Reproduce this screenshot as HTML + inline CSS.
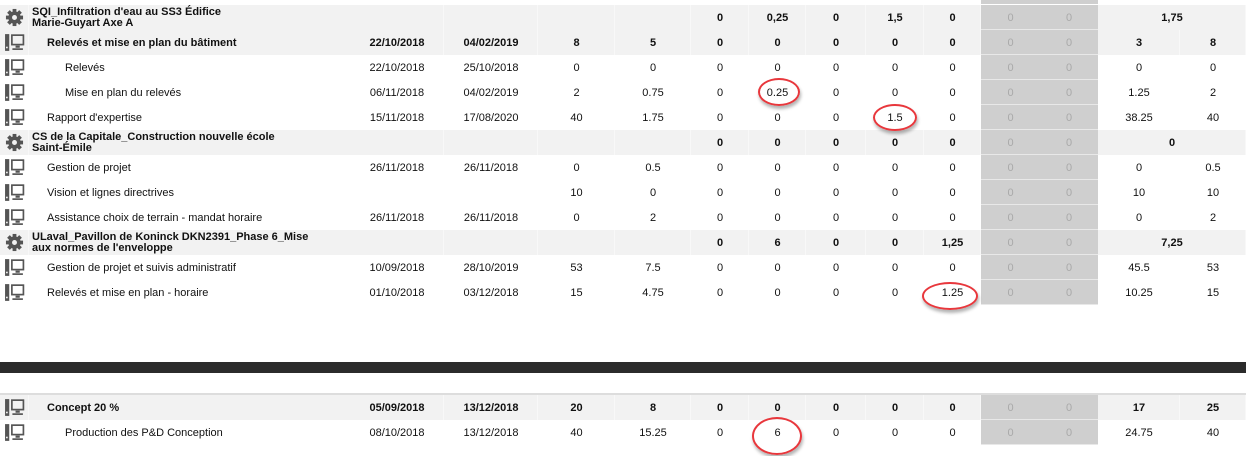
<!DOCTYPE html>
<html><head><meta charset="utf-8"><style>
body{margin:0;width:1246px;height:456px;background:#fff;position:relative;overflow:hidden;font-family:"Liberation Sans",Arial,sans-serif;font-size:11px;color:#111}
table{position:absolute;left:0;border-collapse:collapse;table-layout:fixed;width:1246px}
tr{height:25px}
td{height:25px;padding:0;text-align:center;white-space:nowrap;overflow:hidden;border:none}
tr.g td{background:#f2f2f2;box-shadow:inset -1px 0 0 #f8f8f8;font-weight:bold}
tr.g td.n{box-shadow:none}
td.gr{background:#cfcfcf!important;color:#a9a9a9;font-weight:normal!important;box-shadow:inset 0 -1px 0 #e8e8e8!important}
td.n{text-align:left}
td.p{line-height:11px;font-weight:bold}
.l1{padding-left:18px}.l2{padding-left:36px}.l0{padding-left:3px}
svg{display:block;margin:0 auto}
.ell{position:absolute;border:2.5px solid #e8373c;border-radius:50%;box-shadow:1px 3px 3px rgba(0,0,0,.3)}
</style></head><body>
<div style="position:absolute;left:981px;top:0;width:117px;height:4px;background:#cfcfcf"></div>
<svg width="0" height="0" style="position:absolute"><defs>
<symbol id="mon" viewBox="0 0 20 18"><rect x="1" y="1" width="4" height="16" fill="#555"/><rect x="2" y="13" width="1.5" height="1.5" fill="#fff"/><rect x="7.5" y="2" width="11" height="9" fill="none" stroke="#555" stroke-width="1.6"/><rect x="11" y="12" width="4" height="2" fill="#555"/><rect x="8" y="14.5" width="10" height="1.6" fill="#555"/></symbol>
<symbol id="gear" viewBox="0 0 20 20"><g fill="#555"><circle cx="10" cy="10" r="6.5"/><rect x="8" y="1" width="4" height="18"/><rect x="1" y="8" width="18" height="4"/><rect x="8" y="1" width="4" height="18" transform="rotate(45 10 10)"/><rect x="8" y="1" width="4" height="18" transform="rotate(-45 10 10)"/></g><circle cx="10" cy="10" r="2.6" fill="#f2f2f2"/></symbol>
</defs></svg>
<table style="top:5px">
<colgroup><col style="width:29px"><col style="width:321px"><col style="width:94px"><col style="width:94px"><col style="width:77px"><col style="width:76px"><col style="width:58px"><col style="width:57px"><col style="width:60px"><col style="width:58px"><col style="width:57px"><col style="width:59px"><col style="width:58px"><col style="width:82px"><col style="width:66px"></colgroup>
<tr class="g"><td class="i"><svg width="19" height="19"><use href="#gear"/></svg></td><td class="n p l0">SQI_Infiltration d'eau au SS3 Édifice<br>Marie-Guyart Axe A</td><td></td><td></td><td></td><td></td><td>0</td><td>0,25</td><td>0</td><td>1,5</td><td>0</td><td class="gr">0</td><td class="gr">0</td><td colspan="2">1,75</td></tr>
<tr class="g"><td class="i"><svg width="21" height="19"><use href="#mon"/></svg></td><td class="n l1">Relevés et mise en plan du bâtiment</td><td>22/10/2018</td><td>04/02/2019</td><td>8</td><td>5</td><td>0</td><td>0</td><td>0</td><td>0</td><td>0</td><td class="gr">0</td><td class="gr">0</td><td>3</td><td>8</td></tr>
<tr><td><svg width="21" height="19"><use href="#mon"/></svg></td><td class="n l2">Relevés</td><td>22/10/2018</td><td>25/10/2018</td><td>0</td><td>0</td><td>0</td><td>0</td><td>0</td><td>0</td><td>0</td><td class="gr">0</td><td class="gr">0</td><td>0</td><td>0</td></tr>
<tr><td><svg width="21" height="19"><use href="#mon"/></svg></td><td class="n l2">Mise en plan du relevés</td><td>06/11/2018</td><td>04/02/2019</td><td>2</td><td>0.75</td><td>0</td><td>0.25</td><td>0</td><td>0</td><td>0</td><td class="gr">0</td><td class="gr">0</td><td>1.25</td><td>2</td></tr>
<tr><td><svg width="21" height="19"><use href="#mon"/></svg></td><td class="n l1">Rapport d'expertise</td><td>15/11/2018</td><td>17/08/2020</td><td>40</td><td>1.75</td><td>0</td><td>0</td><td>0</td><td>1.5</td><td>0</td><td class="gr">0</td><td class="gr">0</td><td>38.25</td><td>40</td></tr>
<tr class="g"><td class="i"><svg width="19" height="19"><use href="#gear"/></svg></td><td class="n p l0">CS de la Capitale_Construction nouvelle école<br>Saint-Émile</td><td></td><td></td><td></td><td></td><td>0</td><td>0</td><td>0</td><td>0</td><td>0</td><td class="gr">0</td><td class="gr">0</td><td colspan="2">0</td></tr>
<tr><td><svg width="21" height="19"><use href="#mon"/></svg></td><td class="n l1">Gestion de projet</td><td>26/11/2018</td><td>26/11/2018</td><td>0</td><td>0.5</td><td>0</td><td>0</td><td>0</td><td>0</td><td>0</td><td class="gr">0</td><td class="gr">0</td><td>0</td><td>0.5</td></tr>
<tr><td><svg width="21" height="19"><use href="#mon"/></svg></td><td class="n l1">Vision et lignes directrives</td><td></td><td></td><td>10</td><td>0</td><td>0</td><td>0</td><td>0</td><td>0</td><td>0</td><td class="gr">0</td><td class="gr">0</td><td>10</td><td>10</td></tr>
<tr><td><svg width="21" height="19"><use href="#mon"/></svg></td><td class="n l1">Assistance choix de terrain - mandat horaire</td><td>26/11/2018</td><td>26/11/2018</td><td>0</td><td>2</td><td>0</td><td>0</td><td>0</td><td>0</td><td>0</td><td class="gr">0</td><td class="gr">0</td><td>0</td><td>2</td></tr>
<tr class="g"><td class="i"><svg width="19" height="19"><use href="#gear"/></svg></td><td class="n p l0">ULaval_Pavillon de Koninck DKN2391_Phase 6_Mise<br>aux normes de l'enveloppe</td><td></td><td></td><td></td><td></td><td>0</td><td>6</td><td>0</td><td>0</td><td>1,25</td><td class="gr">0</td><td class="gr">0</td><td colspan="2">7,25</td></tr>
<tr><td><svg width="21" height="19"><use href="#mon"/></svg></td><td class="n l1">Gestion de projet et suivis administratif</td><td>10/09/2018</td><td>28/10/2019</td><td>53</td><td>7.5</td><td>0</td><td>0</td><td>0</td><td>0</td><td>0</td><td class="gr">0</td><td class="gr">0</td><td>45.5</td><td>53</td></tr>
<tr><td><svg width="21" height="19"><use href="#mon"/></svg></td><td class="n l1">Relevés et mise en plan - horaire</td><td>01/10/2018</td><td>03/12/2018</td><td>15</td><td>4.75</td><td>0</td><td>0</td><td>0</td><td>0</td><td>1.25</td><td class="gr">0</td><td class="gr">0</td><td>10.25</td><td>15</td></tr>
</table>
<div style="position:absolute;left:0;top:362px;width:1246px;height:11px;background:#2b2b2b"></div>
<div style="position:absolute;left:0;top:393px;width:1246px;height:2px;background:#ddd"></div>
<table style="top:395px">
<colgroup><col style="width:29px"><col style="width:321px"><col style="width:94px"><col style="width:94px"><col style="width:77px"><col style="width:76px"><col style="width:58px"><col style="width:57px"><col style="width:60px"><col style="width:58px"><col style="width:57px"><col style="width:59px"><col style="width:58px"><col style="width:82px"><col style="width:66px"></colgroup>
<tr class="g"><td class="i"><svg width="21" height="19"><use href="#mon"/></svg></td><td class="n l1">Concept 20 %</td><td>05/09/2018</td><td>13/12/2018</td><td>20</td><td>8</td><td>0</td><td>0</td><td>0</td><td>0</td><td>0</td><td class="gr">0</td><td class="gr">0</td><td>17</td><td>25</td></tr>
<tr><td><svg width="21" height="19"><use href="#mon"/></svg></td><td class="n l2">Production des P&amp;D Conception</td><td>08/10/2018</td><td>13/12/2018</td><td>40</td><td>15.25</td><td>0</td><td>6</td><td>0</td><td>0</td><td>0</td><td class="gr">0</td><td class="gr">0</td><td>24.75</td><td>40</td></tr>
</table>
<div class="ell" style="left:758px;top:78px;width:38px;height:24px"></div>
<div class="ell" style="left:873px;top:104px;width:40px;height:23px"></div>
<div class="ell" style="left:922px;top:282px;width:52px;height:24px"></div>
<div class="ell" style="left:752px;top:417px;width:46px;height:34px"></div>
</body></html>
